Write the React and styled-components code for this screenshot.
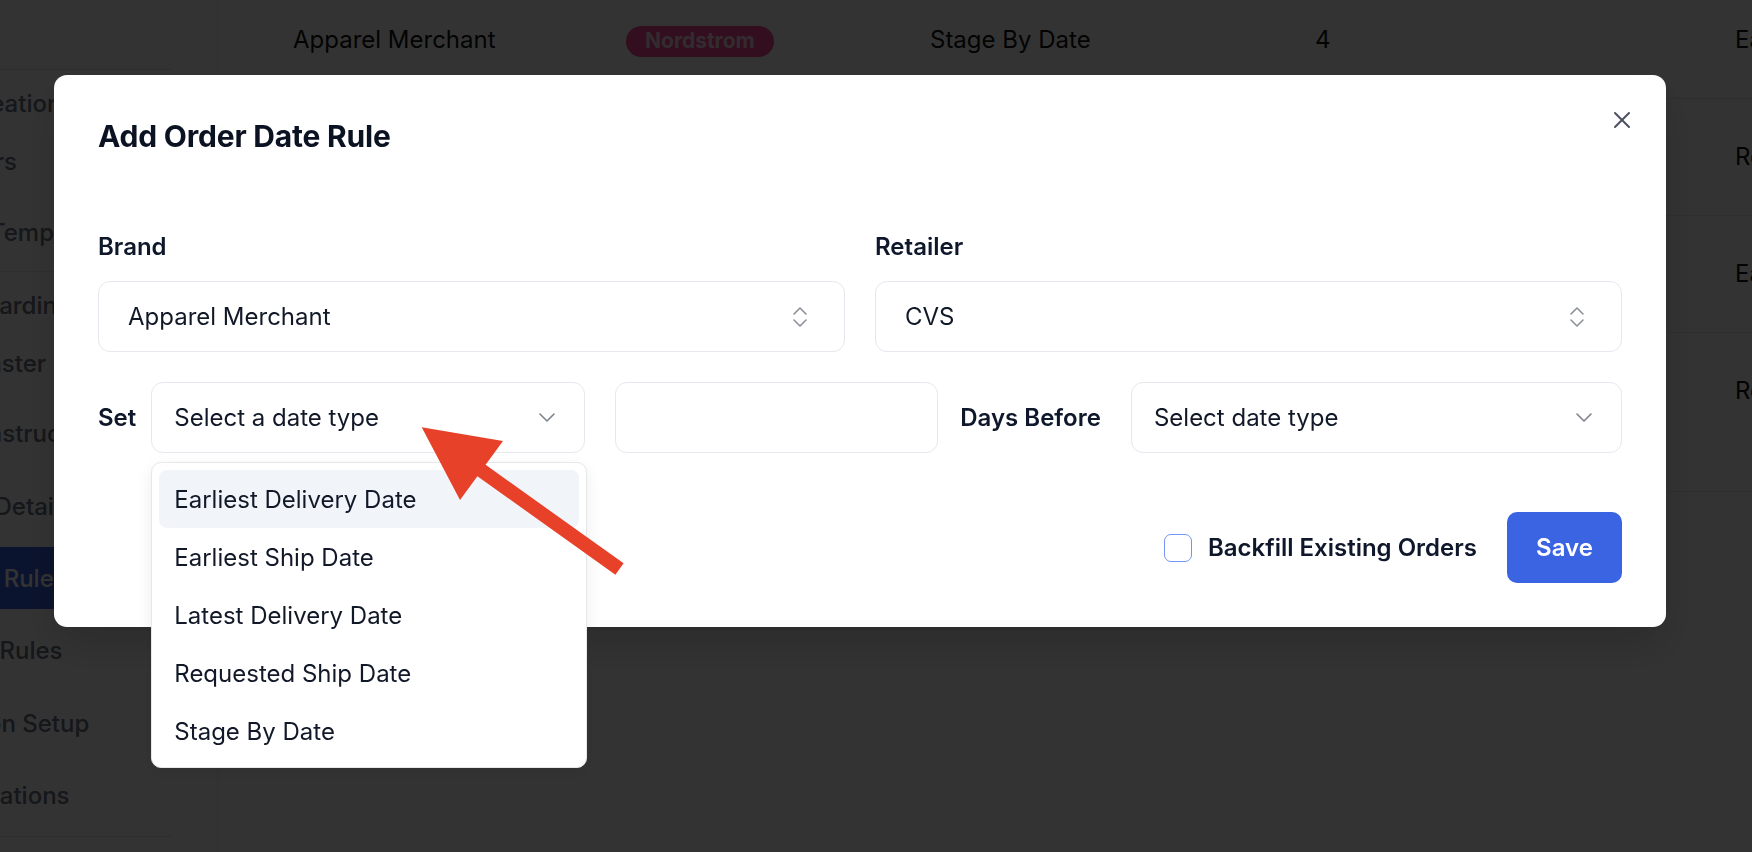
import React from 'react'
import styled, { createGlobalStyle } from 'styled-components'

const GlobalStyle = createGlobalStyle`
  html, body {
    margin: 0;
    padding: 0;
    background: #fff;
    overflow: hidden;
  }
  body {
    font-family: Inter, "Noto Sans", "Liberation Sans", sans-serif;
    color: #111827;
  }
  * {
    box-sizing: border-box;
  }
`

const navItems = [
  { label: 'Order Creation', mt: 4 },
  { label: 'Customers', mt: 0 },
  { label: 'Packing Templates', mt: 13, divider: 10 },
  { label: 'EDI Onboarding', mt: 4 },
  { label: 'Brand Master', mt: 0 },
  { label: 'Vendor Instructions', mt: 12 },
  { label: 'Account Details', mt: 15 },
  { label: 'Due Date Rules', mt: 12, active: true },
  { label: 'Shipping Rules', mt: 12 },
  { label: 'Integration Setup', mt: 15 },
  { label: 'Shop Locations', mt: 14, divider: 12 },
]

const rules = [
  ['Apparel Merchant', 'Nordstrom', 'Stage By Date', '4', 'Earliest Delivery Date'],
  ['Apparel Merchant', 'Macy\'s', 'Earliest Ship Date', '2', 'Requested Ship Date'],
  ['Apparel Merchant', 'Target', 'Latest Delivery Date', '3', 'Earliest Ship Date'],
  ['Apparel Merchant', 'Kohl\'s', 'Requested Ship Date', '5', 'Requested Delivery Date'],
]

const dateTypes = [
  'Earliest Delivery Date',
  'Earliest Ship Date',
  'Latest Delivery Date',
  'Requested Ship Date',
  'Stage By Date',
]

const UpDownIcon = () => (
  <svg width="16" height="22" viewBox="0 0 16 22" fill="none" stroke="#8b9099" strokeWidth="1.6" strokeLinecap="round" strokeLinejoin="round">
    <polyline points="2,8 8,2 14,8" />
    <polyline points="2,14 8,20 14,14" />
  </svg>
)

const ChevronDown = () => (
  <svg width="18" height="11" viewBox="0 0 18 11" fill="none" stroke="#7d838d" strokeWidth="1.6" strokeLinecap="round" strokeLinejoin="round">
    <polyline points="2,2 9,9 16,2" />
  </svg>
)

const CloseIcon = () => (
  <svg width="18" height="18" viewBox="0 0 18 18" fill="none" stroke="#4b5060" strokeWidth="2" strokeLinecap="round">
    <line x1="2" y1="2" x2="16" y2="16" />
    <line x1="16" y1="2" x2="2" y2="16" />
  </svg>
)

const App = () => {
  return (
    <>
      <GlobalStyle />
      <Page>
        <Sidebar>
          <Divider />
          {navItems.map((item) => (
            <React.Fragment key={item.label}>
              <NavItem $mt={item.mt} $active={item.active}>{item.label}</NavItem>
              {item.divider && <Divider $mt={item.divider} />}
            </React.Fragment>
          ))}
        </Sidebar>
        <Main>
          {rules.map((row, i) => (
            <Row key={i} $tall={i === 3}>
              <Cell>{row[0]}</Cell>
              <Cell>{i === 0 ? <Badge>{row[1]}</Badge> : row[1]}</Cell>
              <Cell>{row[2]}</Cell>
              <Cell>{row[3]}</Cell>
              <Cell>{row[4]}</Cell>
            </Row>
          ))}
        </Main>
      </Page>

      <Overlay>
        <Modal>
          <Title>Add Order Date Rule</Title>
          <CloseButton aria-label="Close"><CloseIcon /></CloseButton>

          <FieldGrid>
            <Field>
              <Label>Brand</Label>
              <SelectBox>
                <span>Apparel Merchant</span>
                <UpDownIcon />
              </SelectBox>
            </Field>
            <Field>
              <Label>Retailer</Label>
              <SelectBox>
                <span>CVS</span>
                <UpDownIcon />
              </SelectBox>
            </Field>
          </FieldGrid>

          <DateRow>
            <InlineLabel>Set</InlineLabel>
            <PickerWrap>
              <Picker>
                <span>Select a date type</span>
                <ChevronDown />
              </Picker>
              <Menu>
                {dateTypes.map((d, i) => (
                  <MenuItem key={d} $active={i === 0}>{d}</MenuItem>
                ))}
              </Menu>
            </PickerWrap>
            <DaysInput />
            <InlineLabel $gapLeft>Days Before</InlineLabel>
            <Picker $grow>
              <span>Select date type</span>
              <ChevronDown />
            </Picker>
          </DateRow>

          <Footer>
            <CheckLabel>
              <CheckBox />
              Backfill Existing Orders
            </CheckLabel>
            <SaveButton>Save</SaveButton>
          </Footer>
        </Modal>
      </Overlay>

      <Pointer viewBox="0 0 1752 852">
        <polygon
          fill="#e8412a"
          points="421.7,427.3 503,441 485.6,464.8 623.6,563.3 615.4,574.7 477.4,476.2 460,500"
        />
      </Pointer>
    </>
  )
}

const Page = styled.div`
  display: flex;
  height: 100vh;
  overflow: hidden;
`

const Sidebar = styled.nav`
  flex: none;
  width: 326px;
  margin-left: -108px;
  padding-top: 69px;
  border-right: 1px solid #eceef2;
  display: flex;
  flex-direction: column;
`

const Divider = styled.div`
  height: 1px;
  margin-right: 45px;
  margin-top: ${(p) => p.$mt || 0}px;
  background: #e5e7eb;
`

const NavItem = styled.div`
  height: ${(p) => (p.$active ? 62 : 58)}px;
  margin-top: ${(p) => p.$mt}px;
  display: flex;
  align-items: center;
  font-size: 24px;
  font-weight: 500;
  white-space: nowrap;
  color: ${(p) => (p.$active ? '#fff' : '#6b7280')};
  background: ${(p) => (p.$active ? '#3b64e3' : 'transparent')};
`

const Main = styled.main`
  flex: 1;
  min-width: 0;
  margin-top: -18px;
  overflow: hidden;
`

const Row = styled.div`
  display: grid;
  grid-template-columns: 333px 304px 385px 420px 1fr;
  align-items: start;
  padding: 41px 0 41px 75px;
  min-height: ${(p) => (p.$tall ? 159 : 116)}px;
  border-bottom: 1px solid #e5e7eb;
`

const Cell = styled.div`
  font-size: 24px;
  line-height: 34px;
  color: #111;
  white-space: nowrap;
`

const Badge = styled.span`
  display: inline-flex;
  align-items: center;
  height: 31px;
  padding: 0 19px;
  border-radius: 16px;
  background: #f9479b;
  color: #ffd9ea;
  font-size: 21px;
  font-weight: 700;
  vertical-align: middle;
`

const Overlay = styled.div`
  position: fixed;
  inset: 0;
  background: rgba(0, 0, 0, 0.8);
  display: flex;
  align-items: flex-start;
  padding: 75px 0 0 54px;
`

const Modal = styled.div`
  position: relative;
  width: 1612px;
  padding: 44px;
  background: #fff;
  border-radius: 13px;
  box-shadow: 0 20px 40px rgba(0, 0, 0, 0.15);
`

const Title = styled.h2`
  margin: 0;
  font-size: 30px;
  line-height: 34px;
  font-weight: 700;
  letter-spacing: -0.2px;
  color: #0b1222;
`

const CloseButton = styled.button`
  position: absolute;
  top: 36px;
  right: 35px;
  width: 18px;
  height: 18px;
  padding: 0;
  border: none;
  background: none;
  display: flex;
`

const FieldGrid = styled.div`
  display: grid;
  grid-template-columns: 1fr 1fr;
  column-gap: 30px;
  margin-top: 79px;
`

const Field = styled.div`
  display: flex;
  flex-direction: column;
`

const Label = styled.label`
  font-size: 24px;
  line-height: 30px;
  font-weight: 600;
  color: #0f172a;
  margin-bottom: 19px;
`

const SelectBox = styled.div`
  height: 71px;
  display: flex;
  align-items: center;
  justify-content: space-between;
  padding: 0 36px 0 29px;
  border: 1px solid #e6e8ee;
  border-radius: 12px;
  font-size: 24px;
  color: #111827;
`

const DateRow = styled.div`
  display: flex;
  align-items: center;
  margin-top: 30px;
`

const InlineLabel = styled.span`
  font-size: 24px;
  font-weight: 600;
  color: #0f172a;
  white-space: nowrap;
  margin: ${(p) => (p.$gapLeft ? '0 30px 0 22px' : '0 15px 0 0')};
`

const PickerWrap = styled.div`
  position: relative;
  width: 434px;
  flex: none;
`

const Picker = styled.div`
  height: 71px;
  flex: ${(p) => (p.$grow ? 1 : 'none')};
  display: flex;
  align-items: center;
  justify-content: space-between;
  padding: 0 28px 0 22px;
  border: 1px solid #e6e8ee;
  border-radius: 12px;
  font-size: 24px;
  color: #111827;
`

const DaysInput = styled.input`
  width: 323px;
  height: 71px;
  margin-left: 30px;
  border: 1px solid #e6e8ee;
  border-radius: 12px;
  font-size: 24px;
  outline: none;
`

const Menu = styled.div`
  position: absolute;
  top: calc(100% + 9px);
  left: 0;
  width: 436px;
  padding: 7px;
  background: #fff;
  border: 1px solid #e5e7eb;
  border-radius: 10px;
  box-shadow: 0 6px 16px rgba(0, 0, 0, 0.08);
  z-index: 2;
`

const MenuItem = styled.div`
  height: 58px;
  display: flex;
  align-items: center;
  padding: 0 15px;
  border-radius: 8px;
  font-size: 24px;
  color: #111827;
  background: ${(p) => (p.$active ? '#f1f4f9' : 'transparent')};
`

const Footer = styled.div`
  display: flex;
  justify-content: flex-end;
  align-items: center;
  gap: 30px;
  margin-top: 59px;
`

const CheckLabel = styled.label`
  display: flex;
  align-items: center;
  gap: 16px;
  font-size: 24px;
  font-weight: 600;
  color: #0f172a;
`

const CheckBox = styled.span`
  width: 28px;
  height: 28px;
  border: 1.5px solid #7394f0;
  border-radius: 7px;
`

const SaveButton = styled.button`
  width: 115px;
  height: 71px;
  border: none;
  border-radius: 10px;
  background: #3b64e3;
  color: #fff;
  font-family: inherit;
  font-size: 24px;
  font-weight: 600;
`

const Pointer = styled.svg`
  position: fixed;
  inset: 0;
  width: 1752px;
  height: 852px;
  pointer-events: none;
`

export default App
